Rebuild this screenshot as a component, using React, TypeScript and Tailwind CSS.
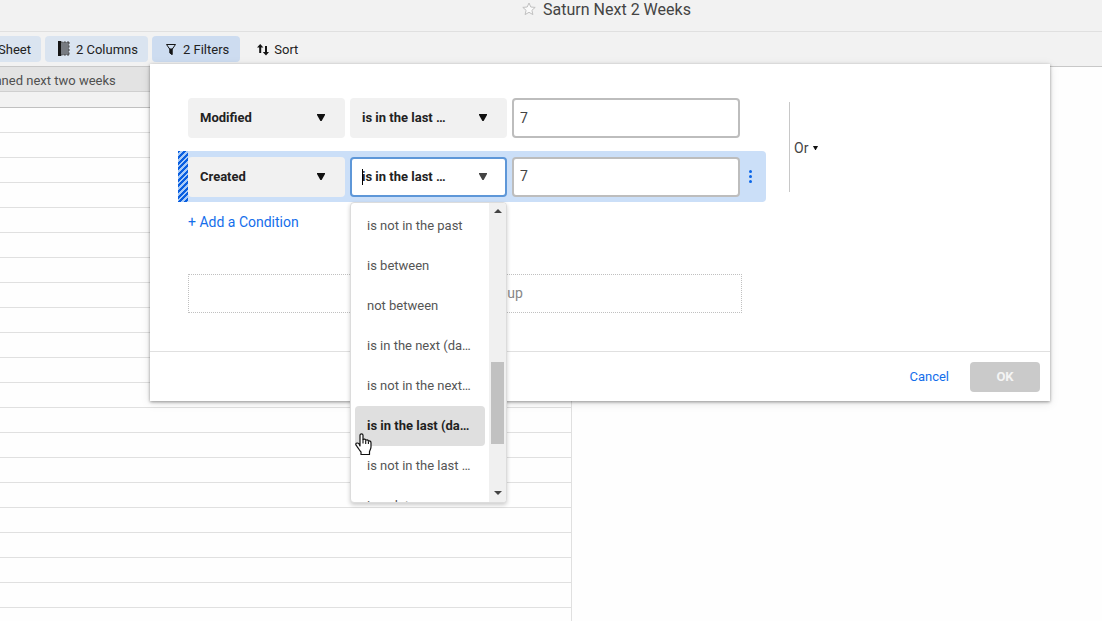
import React, { useState } from 'react';

const operators = [
  'is not in the past',
  'is between',
  'not between',
  'is in the next (days)',
  'is not in the next (days)',
  'is in the last (days)',
  'is not in the last (days)',
  'is a date',
];

const fields = ['Modified', 'Created'];

function Caret({ className }: { className: string }) {
  return (
    <svg viewBox="0 0 8 7" className={className} fill="currentColor" aria-hidden="true">
      <path d="M0 0h8v1L4.6 7H3.4L0 1z" />
    </svg>
  );
}

interface PickerProps {
  label: string;
  value: string;
  options: string[];
  onChange: (value: string) => void;
  active?: boolean;
  children?: React.ReactNode;
}

function Picker({ label, value, options, onChange, active, children }: PickerProps) {
  return (
    <div className="relative w-[157px] shrink-0">
      <select
        aria-label={label}
        value={value}
        onChange={(e) => onChange(e.target.value)}
        className={`block h-10 w-full appearance-none truncate rounded border-2 pl-[10px] pr-[58px] text-[13px] font-bold text-[#222] outline-none ${
          active ? 'border-[#5e97d8] bg-white' : 'border-[#f1f1f1] bg-[#f1f1f1]'
        }`}
      >
        {options.map((option) => (
          <option key={option}>{option}</option>
        ))}
      </select>
      <Caret
        className={`pointer-events-none absolute right-5 top-4 h-[7px] w-2 ${
          active ? 'text-[#444]' : 'text-[#111]'
        }`}
      />
      {children}
    </div>
  );
}

function DaysInput({ label }: { label: string }) {
  const [days, setDays] = useState('7');

  return (
    <input
      type="text"
      aria-label={label}
      value={days}
      onChange={(e) => setDays(e.target.value)}
      className="h-10 w-[228px] rounded border-2 border-[#bdbdbd] bg-white px-[6px] pb-px text-sm text-[#444] outline-none"
    />
  );
}

function OperatorMenu({ value, onSelect }: { value: string; onSelect: (value: string) => void }) {
  return (
    <div className="absolute left-0 top-[45px] z-10 flex h-[301px] w-full overflow-hidden rounded-sm border border-[#dcdcdc] bg-white shadow-[0_2px_4px_rgba(0,0,0,0.2)]">
      <ul role="listbox" aria-label="Operators" className="min-w-0 flex-1 overflow-hidden px-1 pt-[3px]">
        {operators.map((operator) => (
          <li
            key={operator}
            role="option"
            aria-selected={operator === value}
            onClick={() => onSelect(operator)}
            className={`h-10 cursor-pointer truncate rounded px-3 text-[13px] leading-10 ${
              operator === value ? 'bg-[#dfdfdf] font-bold text-[#1f1f1f]' : 'text-[#555]'
            }`}
          >
            {operator}
          </li>
        ))}
      </ul>
      <div className="flex w-[17px] flex-col items-center bg-[#f0f0f0] pb-[7px] pt-[6px]">
        <svg viewBox="0 0 8 4" className="h-1 w-2" fill="#444">
          <path d="M0 4 4 0l4 4z" />
        </svg>
        <div className="mt-[149px] h-[82px] w-[13px] bg-[#c1c1c1]" />
        <svg viewBox="0 0 8 4" className="mt-auto h-1 w-2" fill="#444">
          <path d="M0 0h8L4 4z" />
        </svg>
      </div>
    </div>
  );
}

function HandCursor() {
  return (
    <svg viewBox="0 0 17 22" className="pointer-events-none absolute left-[5px] top-[276px] z-20 h-[22px] w-[17px]" aria-hidden="true">
      <path
        d="M5 13V2.200C5 .3 8 .3 8 2.200V6.500c.9-.8 2.500-.4 2.700.7.9-.7 2.400-.3 2.700.9 1-.5 2.600.1 2.600 1.600V14c0 1.800-.9 3-1.500 4.500v3H6v-2.500c-1.500-1.500-2.500-3.500-3.700-5.200C1.500 12.600.5 11.900.8 10.900c.4-1.200 2.200-1.100 3.100-.3z"
        fill="#fff"
        stroke="#111"
        strokeWidth="1.2"
        strokeLinejoin="round"
      />
      <path d="M8 6.500v4M10.700 7.500V11M13.400 8.500V11" stroke="#111" strokeWidth="1.1" />
    </svg>
  );
}

function FilterDialog() {
  const [first, setFirst] = useState({ field: 'Modified', operator: 'is in the last (days)' });
  const [second, setSecond] = useState({ field: 'Created', operator: 'is in the last (days)' });

  return (
    <div
      role="dialog"
      aria-label="Filters"
      className="absolute left-[150px] right-[52px] top-[64px] bg-white shadow-[0_1px_3px_rgba(0,0,0,0.4),0_2px_10px_rgba(0,0,0,0.1)]"
    >
      <div className="flex pl-7 pt-[34px]">
        <div className="w-[588px]">
          <div className="flex gap-[5px] pl-[10px]">
            <Picker label="First field" value={first.field} options={fields} onChange={(field) => setFirst({ ...first, field })} />
            <Picker label="First operator" value={first.operator} options={operators} onChange={(operator) => setFirst({ ...first, operator })} />
            <DaysInput label="First number of days" />
          </div>

          <div className="mt-[13px] flex h-[51px] rounded-sm bg-[#cbdff8]">
            <div className="w-[10px] bg-[repeating-linear-gradient(135deg,#0a5fe0_0px,#0a5fe0_2px,#a9cbf7_2px,#a9cbf7_4px)]" />
            <div className="flex items-center gap-[5px]">
              <Picker label="Second field" value={second.field} options={fields} onChange={(field) => setSecond({ ...second, field })} />
              <Picker
                label="Second operator"
                value={second.operator}
                options={operators}
                onChange={(operator) => setSecond({ ...second, operator })}
                active
              >
                <span className="pointer-events-none absolute left-3 top-3 h-4 w-px bg-black" />
                <OperatorMenu value={second.operator} onSelect={(operator) => setSecond({ ...second, operator })} />
                <HandCursor />
              </Picker>
              <DaysInput label="Second number of days" />
            </div>
            <button type="button" aria-label="Condition menu" className="flex flex-1 items-center pl-[9px]">
              <svg viewBox="0 0 3 13" className="h-[13px] w-[3px]" fill="#0a66e8">
                <circle cx="1.5" cy="1.5" r="1.5" />
                <circle cx="1.5" cy="6.5" r="1.5" />
                <circle cx="1.5" cy="11.5" r="1.5" />
              </svg>
            </button>
          </div>

          <button type="button" className="ml-[10px] mt-[10px] block text-sm text-[#146eeb]">
            + Add a Condition
          </button>

          <button
            type="button"
            className="ml-[10px] mt-[42px] block h-[39px] w-[554px] border border-dotted border-[#c0c0c0] pb-[2px] pr-[3px] text-sm text-[#888]"
          >
            Add Another Group
          </button>
        </div>

        <div className="ml-[23px] mt-1 flex h-[90px] items-center border-l border-[#c8c8c8] pl-1 pt-[2px]">
          <button type="button" className="flex items-center gap-[5px] text-sm text-[#444]">
            Or
            <Caret className="h-1 w-[5px] text-[#111]" />
          </button>
        </div>
      </div>

      <div className="mt-[38px] flex h-[50px] items-center justify-end gap-[21px] border-t border-[#e0e0e0] pr-[10px] text-[13px]">
        <button type="button" className="text-[#146eeb]">Cancel</button>
        <button type="button" className="h-[30px] w-[70px] rounded-sm bg-[#cacaca] font-bold text-[#f4f4f4]" disabled>
          OK
        </button>
      </div>
    </div>
  );
}

function Toolbar() {
  return (
    <div className="flex h-[34px] items-center gap-1 text-[13px] text-[#222]">
      <button type="button" className="-ml-3 h-[26px] rounded-sm bg-[#dae4f0] px-[10px] pt-px">
        Sheet
      </button>
      <button type="button" className="flex h-[26px] items-center gap-[6px] rounded-sm bg-[#dae4f0] pl-3 pr-[10px] pt-px">
        <svg viewBox="0 0 13 15" className="mb-[2px] h-[15px] w-[13px]">
          <path d="M3 1h9v13H3z" fill="#777b81" />
          <path d="M3.5 1H12M3.5 14H12" stroke="#444" strokeWidth="1.2" strokeDasharray="2 1.3" />
          <path d="M12 1v13" stroke="#444" strokeDasharray="2 1.5" />
          <path d="M1 0h3v15H1z" fill="#151515" />
        </svg>
        2 Columns
      </button>
      <button type="button" className="flex h-[26px] items-center gap-[6px] rounded-sm bg-[#cddcf0] pl-[13px] pr-[11px] pt-px">
        <svg viewBox="0 0 12 13" className="h-[13px] w-3" fill="none" stroke="#151515">
          <path d="M1.5 1.5h9L7 6.5v5L5 10V6.5z" strokeLinejoin="round" />
          <path d="M4 5.5h4L7.500 7v5L4.500 10V7z" fill="#151515" stroke="none" />
        </svg>
        2 Filters
      </button>
      <button type="button" className="flex h-[26px] items-center gap-[5px] px-[13px] pt-px">
        <svg viewBox="0 0 12 13" className="mb-px h-[13px] w-3" fill="#151515">
          <path d="M2.2 10V4.5H0L3.2 1l3.2 3.5H4.2V10zM8 3h2v6h2l-3 3.5L5.8 9H8z" />
        </svg>
        Sort
      </button>
    </div>
  );
}

export default function App() {
  return (
    <div className="relative flex min-h-screen flex-col bg-[#fefefe] font-['Roboto','Liberation_Sans',sans-serif]">
      <header className="flex h-8 items-start justify-center gap-[7px] border-b border-[#e0e0e0] bg-[#f2f2f2] pl-[111px]">
        <button type="button" aria-label="Add to favorites" className="mt-[2px]">
          <svg viewBox="0 0 14 14" className="size-[14px]" fill="#fafafa" stroke="#c0c0c0">
            <path d="m7 1 1.8 4 4.4.4-3.3 2.900 1 4.300L7 10.300l-3.900 2.300 1-4.300L.8 5.400 5.200 5z" strokeLinejoin="round" />
          </svg>
        </button>
        <h1 className="text-base leading-5 text-[#444]">Saturn Next 2 Weeks</h1>
      </header>
      <div className="border-b border-[#c8c8c8] bg-[#f2f2f2]">
        <Toolbar />
      </div>

      <table className="w-[572px] border-collapse text-[13px]">
        <thead>
          <tr>
            <th className="h-6 border-b border-[#cfcfcf] bg-[#e3e3e3] p-0 pt-[3px] text-left font-normal text-[#505050]">
              <span className="-ml-6 whitespace-nowrap">Planned next two weeks</span>
            </th>
          </tr>
          <tr>
            <th className="h-4 border-b border-[#c0c0c0] bg-[#f2f2f2] p-0" />
          </tr>
        </thead>
        <tbody>
          {Array.from({ length: 20 }, (_, row) => (
            <tr key={row}>
              <td className="h-[25px] border-b border-r border-[#e0e0e0] p-0" />
            </tr>
          ))}
        </tbody>
      </table>
      <div className="w-[572px] flex-1 border-r border-[#e0e0e0]" />

      <FilterDialog />
    </div>
  );
}
